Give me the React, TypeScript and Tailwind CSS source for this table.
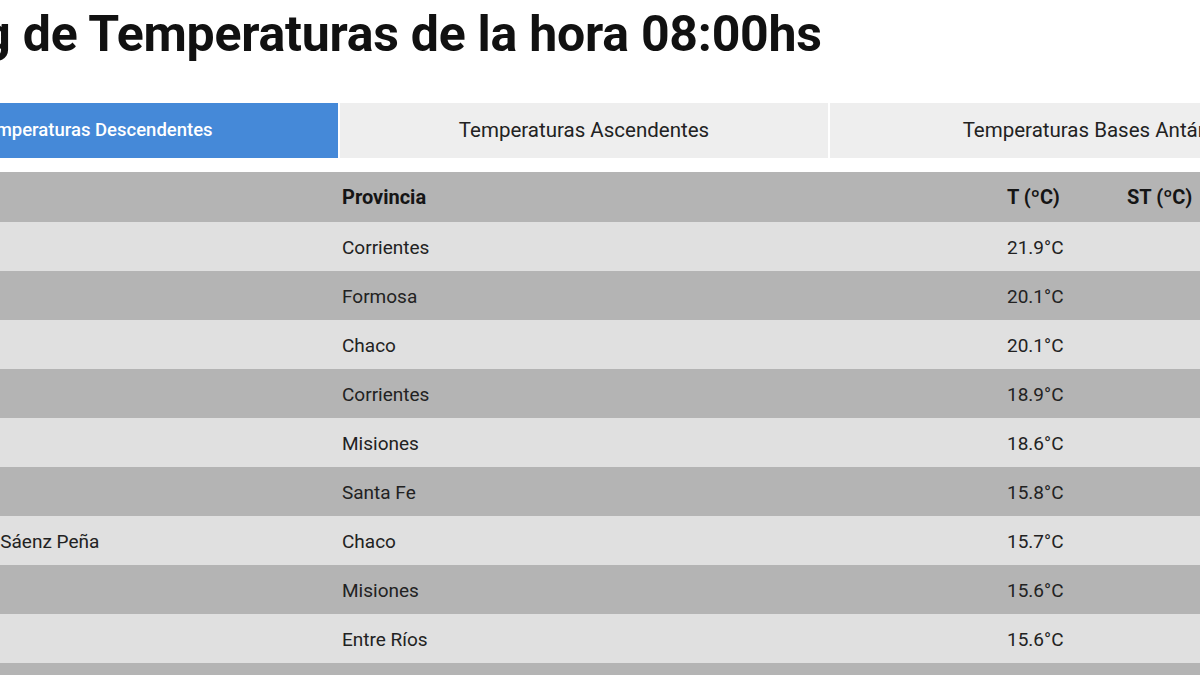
import React from "react";

const rows = [
  { name: "Ituzaingó", prov: "Corrientes", t: "21.9°C" },
  { name: "Formosa", prov: "Formosa", t: "20.1°C" },
  { name: "Resistencia", prov: "Chaco", t: "20.1°C" },
  { name: "Corrientes", prov: "Corrientes", t: "18.9°C" },
  { name: "Posadas", prov: "Misiones", t: "18.6°C" },
  { name: "Reconquista", prov: "Santa Fe", t: "15.8°C" },
  { name: "Presidencia Roque Sáenz Peña", prov: "Chaco", t: "15.7°C" },
  { name: "Oberá", prov: "Misiones", t: "15.6°C" },
  { name: "Concordia", prov: "Entre Ríos", t: "15.6°C" },
  { name: "Iguazú", prov: "Misiones", t: "15.5°C" },
];

export default function App() {
  return (
    <div
      className="w-[1200px] h-[675px] overflow-hidden bg-white text-[#222]"
      style={{ fontFamily: "Roboto, 'Noto Sans', sans-serif" }}
    >
      <div className="ml-[-150px] w-[1530px]">
        <h1 className="ml-[-21px] pt-[2px] h-[103px] text-[50px] font-bold leading-[64px] text-[#111] tracking-[-0.25px] whitespace-nowrap">
          Ranking de Temperaturas de la hora 08:00hs
        </h1>
        <div className="grid grid-cols-[488px_488px_552px] gap-[2px] h-[55px]">
          <div className="bg-[#4589d8] text-white font-medium text-[18.5px] flex items-center justify-center whitespace-nowrap">
            Temperaturas Descendentes
          </div>
          <div className="bg-[#eeeeee] text-[20.5px] flex items-center justify-center text-[#222] whitespace-nowrap">
            Temperaturas Ascendentes
          </div>
          <div className="bg-[#eeeeee] text-[20.5px] flex items-center justify-center text-[#222] whitespace-nowrap">
            Temperaturas Bases Antárticas
          </div>
        </div>
        <div className="mt-[14px] ml-[-28px]">
          <div className="flex h-[50px] items-center bg-[#b4b4b4] font-bold text-[20px] text-[#151515]">
            <div className="w-[508px] pl-[16px]">Estación</div>
            <div className="w-[665px] pl-[12px]">Provincia</div>
            <div className="w-[120px] pl-[12px]">T (ºC)</div>
            <div className="w-[120px] pl-[12px] whitespace-nowrap">ST (ºC)</div>
            <div className="flex-1 pl-[12px] whitespace-nowrap">HR (%)</div>
          </div>
          {rows.map((r, i) => (
            <div
              key={i}
              className={`flex h-[49px] pt-[3px] items-center text-[19px] text-[#222] ${
                i % 2 === 0 ? "bg-[#e0e0e0]" : "bg-[#b4b4b4]"
              }`}
            >
              <div className="w-[508px] pl-[16px] whitespace-nowrap">{r.name}</div>
              <div className="w-[665px] pl-[12px]">{r.prov}</div>
              <div className="w-[120px] pl-[12px]">{r.t}</div>
              <div className="w-[120px] pl-[12px]"></div>
              <div className="flex-1 pl-[12px]"></div>
            </div>
          ))}
        </div>
      </div>
    </div>
  );
}
